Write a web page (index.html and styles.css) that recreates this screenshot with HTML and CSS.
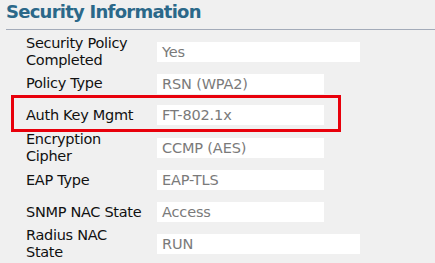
FILE: index.html
```html
<!DOCTYPE html>
<html>
<head>
<meta charset="utf-8">
<link rel="stylesheet" href="styles.css">
</head>
<body>
<div class="panel">
  <h2 class="title">Security Information</h2>
  <div class="grid">
    <div class="label">Security Policy<br>Completed</div>
    <div class="value wide">Yes</div>
    <div class="label">Policy Type</div>
    <div class="value">RSN (WPA2)</div>
    <div class="label">Auth Key Mgmt</div>
    <div class="value">FT-802.1x</div>
    <div class="label">Encryption<br>Cipher</div>
    <div class="value">CCMP (AES)</div>
    <div class="label">EAP Type</div>
    <div class="value">EAP-TLS</div>
    <div class="label">SNMP NAC State</div>
    <div class="value">Access</div>
    <div class="label">Radius NAC<br>State</div>
    <div class="value wide">RUN</div>
  </div>
  <div class="highlight"></div>
</div>
</body>
</html>
```
FILE: styles.css
```css
html, body {
  margin: 0;
  padding: 0;
  background: #f0f0f0;
}
.panel {
  position: relative;
  padding-left: 6px;
  height: 263px;
  overflow: hidden;
  font-family: "DejaVu Sans", Verdana, sans-serif;
}
.title {
  margin: 0;
  padding: 2px 0 7px 0;
  font-size: 18px;
  line-height: 20px;
  font-weight: bold;
  letter-spacing: -0.75px;
  color: #2b6889;
  border-bottom: 1px solid #a3abb9;
}
.grid {
  display: grid;
  margin: 6px 0 0 20px;
  grid-template-columns: 131px auto;
  grid-template-rows: 32px 31px 32px 33px 32px 32px 32px;
  align-items: center;
  justify-items: start;
}
.label {
  font-size: 14.5px;
  line-height: 17px;
  letter-spacing: -0.3px;
  color: #111;
}
.value {
  box-sizing: border-box;
  width: 167px;
  height: 20px;
  padding-left: 5px;
  background: #fff;
  font-size: 14.5px;
  line-height: 20px;
  letter-spacing: -0.15px;
  color: #7a7a7a;
}
.value.wide {
  width: 203px;
}
.highlight {
  position: absolute;
  left: 11px;
  top: 95px;
  width: 330px;
  height: 37px;
  box-sizing: border-box;
  border: 3px solid #e8000b;
}
```
